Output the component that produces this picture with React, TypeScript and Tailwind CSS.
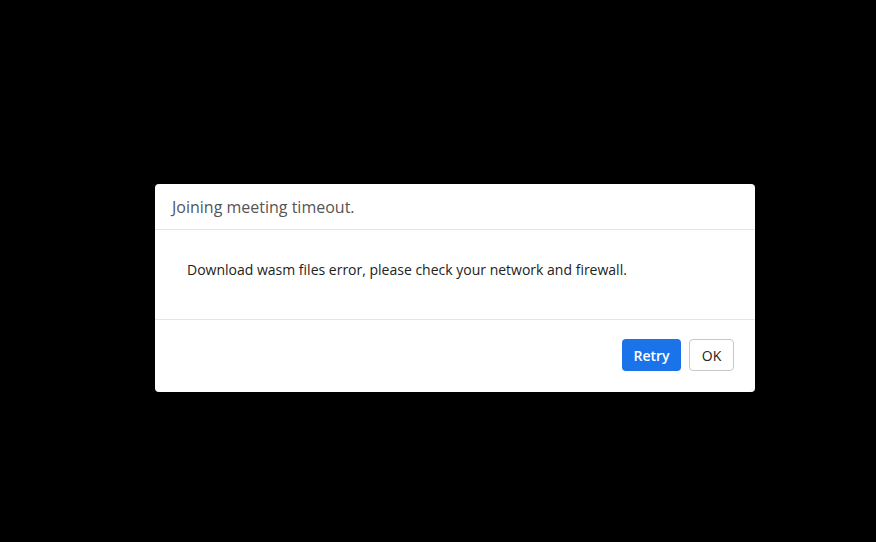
export default function App() {
    return (
        <div
            className="w-[876px] h-[542px] bg-black flex items-start pl-[155px] pt-[184px]"
            style={{ fontFamily: '"Open Sans", "Liberation Sans", sans-serif' }}
        >
            <div className="w-[600px] bg-white rounded-[4px] flex flex-col">
                {/* Header */}
                <div className="h-[46px] px-[17px] flex items-center border-b border-[#e5e5e5]">
                    <span className="text-[16px] text-[#555] leading-none">Joining meeting timeout.</span>
                </div>

                {/* Body */}
                <div className="h-[90px] pl-[32px] pt-[30px] border-b border-[#e5e5e5]">
                    <p className="text-[14px] text-[#222] leading-[20px]">
                        Download wasm files error, please check your network and firewall.
                    </p>
                </div>

                {/* Footer */}
                <div className="h-[72px] flex items-center justify-end gap-[8px] pr-[21px] pb-[2px]">
                    <button className="w-[59px] h-[32px] rounded-[4px] bg-[#1a73e8] text-white text-[14px] font-semibold">
                        Retry
                    </button>
                    <button className="w-[45px] h-[32px] rounded-[4px] border border-[#c8c8c8] bg-white text-[#222] text-[14px]">
                        OK
                    </button>
                </div>
            </div>
        </div>
    );
}
